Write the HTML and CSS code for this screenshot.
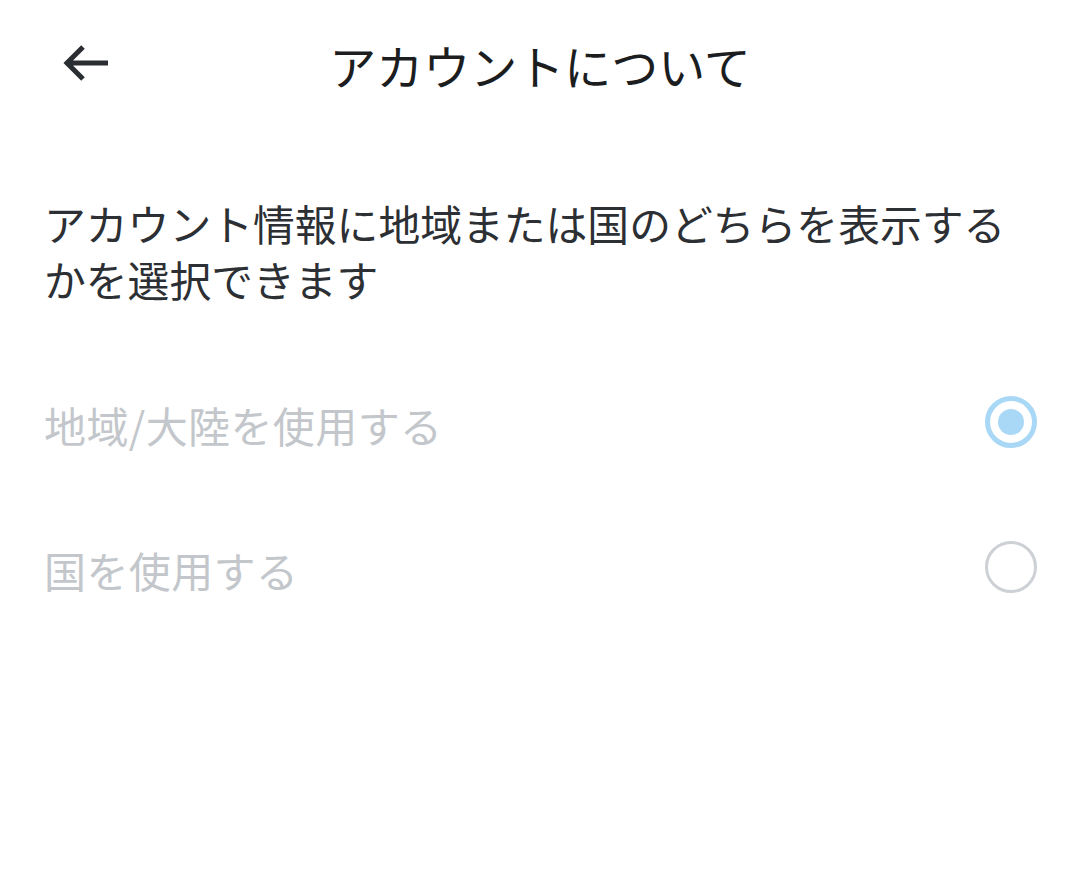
FILE: index.html
```html
<!DOCTYPE html>
<html lang="ja">
<head>
<meta charset="utf-8">
<link rel="stylesheet" href="styles.css">
</head>
<body>
<div class="screen">
  <header class="topbar">
    <div class="back">
      <svg width="52" height="42" viewBox="0 0 52 42">
        <path d="M49 19 H9 M24 3 L8 19 L24 35" fill="none" stroke="#2a2d31" stroke-width="5" stroke-linecap="butt" stroke-linejoin="miter"/>
      </svg>
    </div>
    <h1 class="title">アカウントについて</h1>
    <div></div>
  </header>
  <p class="desc">アカウント情報に地域または国のどちらを表示するかを選択できます</p>
  <div class="options">
    <div class="option">
      <span class="label">地域/大陸を使用する</span>
      <span class="radio checked"><span class="dot"></span></span>
    </div>
    <div class="option">
      <span class="label">国を使用する</span>
      <span class="radio"></span>
    </div>
  </div>
</div>
</body>
</html>
```
FILE: styles.css
```css
html, body {
  margin: 0;
  padding: 0;
  background: #ffffff;
}
.screen {
  width: 1080px;
  height: 872px;
  font-family: "Noto Sans CJK JP", "Noto Sans", sans-serif;
}
.topbar {
  height: 136px;
  display: grid;
  grid-template-columns: 1fr auto 1fr;
  align-items: center;
}
.back {
  padding-left: 59px;
  display: flex;
  align-items: center;
  padding-bottom: 6px;
}
.title {
  margin: 0;
  font-size: 47px;
  font-weight: 400;
  color: #1c1d1f;
  line-height: 1;
  padding-bottom: 8px;
}
.desc {
  margin: 59px 0 0 0;
  padding: 0 44px;
  font-size: 41.8px;
  line-height: 56px;
  color: #2c2f33;
}
.options {
  margin-top: 43px;
  display: flex;
  flex-direction: column;
}
.option {
  height: 145px;
  display: flex;
  align-items: center;
  justify-content: space-between;
  padding: 0 43px 0 44px;
}
.label {
  font-size: 42px;
  color: #c3c7cb;
  line-height: 1;
  padding-top: 4px;
  letter-spacing: 0.4px;
}
.radio {
  width: 52px;
  height: 52px;
  box-sizing: border-box;
  border-radius: 50%;
  border: 3px solid #cdd1d5;
  display: flex;
  align-items: center;
  justify-content: center;
  margin-bottom: 2px;
}
.radio.checked {
  border: 5px solid #a9d8f7;
}
.dot {
  width: 26px;
  height: 26px;
  border-radius: 50%;
  background: #a9d8f7;
}
```
